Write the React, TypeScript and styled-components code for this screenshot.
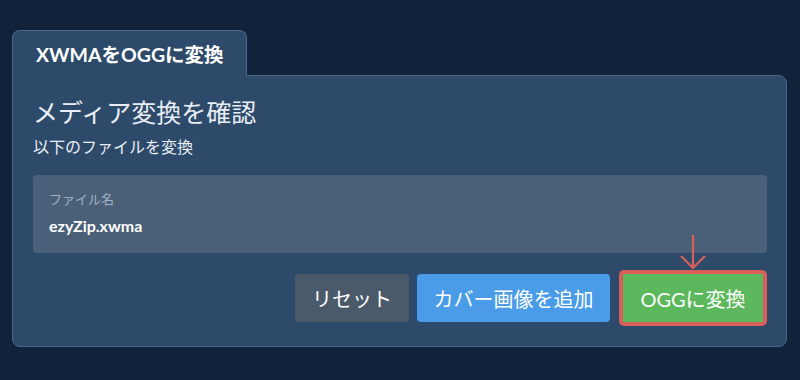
import React from 'react'
import styled, { createGlobalStyle } from 'styled-components'

const GlobalStyle = createGlobalStyle`
    html, body {
        margin: 0;
        padding: 0;
        background: #11233a;
        font-family: Lato, "Noto Sans CJK JP", sans-serif;
    }
`

const Page = styled.div`
    width: 800px;
    height: 380px;
    box-sizing: border-box;
    padding: 30px 13px 0 12px;
    background: #11233a;
`

const Tab = styled.div`
    position: relative;
    z-index: 1;
    width: 235px;
    height: 46px;
    box-sizing: border-box;
    margin-bottom: -1px;
    padding: 0 23px;
    display: flex;
    align-items: center;
    background: #2d4a6a;
    border: 1px solid #4d6686;
    border-bottom: 0;
    border-radius: 8px 8px 0 0;
    color: #ffffff;
    font-size: 19.5px;
    font-weight: 700;
    white-space: nowrap;
`

const Panel = styled.div`
    height: 272px;
    box-sizing: border-box;
    padding: 20px 19px 0 20px;
    background: #2d4a6a;
    border: 1px solid #4d6686;
    border-radius: 0 8px 8px 8px;
`

const Heading = styled.h1`
    margin: 0;
    font-size: 25px;
    font-weight: 400;
    line-height: 32px;
    color: #e9eef4;
`

const Subtitle = styled.p`
    margin: 8px 0 0;
    font-size: 16px;
    line-height: 22px;
    color: #e9eef4;
`

const FileBox = styled.div`
    margin-top: 17px;
    height: 78px;
    box-sizing: border-box;
    padding: 15px 16px 0;
    background: #4a6078;
    border-radius: 4px;
`

const FileLabel = styled.div`
    font-size: 13px;
    line-height: 18px;
    color: #a3b0bf;
`

const FileName = styled.div`
    margin-top: 8px;
    font-size: 16px;
    font-weight: 700;
    line-height: 20px;
    color: #ffffff;
`

const Actions = styled.div`
    margin-top: 17px;
    display: flex;
    justify-content: flex-end;
    align-items: center;
    gap: 8px;
`

const Button = styled.button<{ $bg: string; $w: number }>`
    width: ${({ $w }) => $w}px;
    height: 48px;
    padding: 0;
    border: 0;
    border-radius: 4px;
    background: ${({ $bg }) => $bg};
    color: #ffffff;
    font-family: Lato, "Noto Sans CJK JP", sans-serif;
    font-size: 20px;
    white-space: nowrap;
    cursor: pointer;
`

const Highlight = styled.div`
    position: relative;
    margin-left: 1px;
    border: 4px solid #d9605a;
    border-radius: 5px;
    display: flex;
`

const ConvertButton = styled(Button)`
    border-radius: 0;
`

const Arrow = styled.svg`
    position: absolute;
    left: 50%;
    top: -40px;
    transform: translateX(-50%);
`

export default function App() {
    return (
        <>
            <GlobalStyle />
            <Page>
                <Tab>XWMAをOGGに変換</Tab>
                <Panel>
                    <Heading>メディア変換を確認</Heading>
                    <Subtitle>以下のファイルを変換</Subtitle>
                    <FileBox>
                        <FileLabel>ファイル名</FileLabel>
                        <FileName>ezyZip.xwma</FileName>
                    </FileBox>
                    <Actions>
                        <Button $bg="#4b5a6a" $w={114}>
                            リセット
                        </Button>
                        <Button $bg="#4a9be8" $w={193}>
                            カバー画像を追加
                        </Button>
                        <Highlight>
                            <Arrow width="30" height="36" viewBox="0 0 30 36">
                                <path
                                    d="M15 1 V34 M3 22 L15 34 L27 22"
                                    fill="none"
                                    stroke="#d9605a"
                                    strokeWidth="2.2"
                                />
                            </Arrow>
                            <ConvertButton $bg="#5cb85c" $w={140}>
                                OGGに変換
                            </ConvertButton>
                        </Highlight>
                    </Actions>
                </Panel>
            </Page>
        </>
    )
}
